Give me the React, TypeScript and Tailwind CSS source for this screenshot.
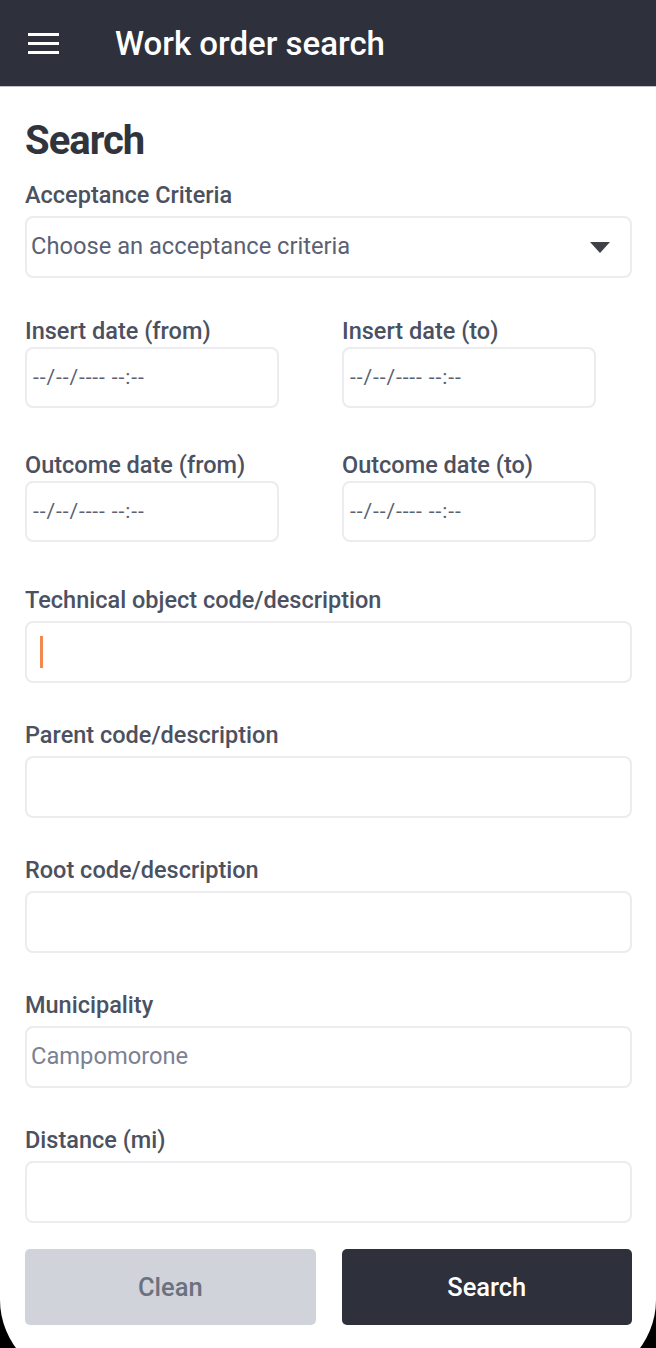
const dateFields = [
  ["Insert date (from)", "Insert date (to)"],
  ["Outcome date (from)", "Outcome date (to)"],
];

const textFields = [
  { label: "Technical object code/description", placeholder: "", caret: true },
  { label: "Parent code/description", placeholder: "" },
  { label: "Root code/description", placeholder: "" },
  { label: "Municipality", placeholder: "Campomorone" },
  { label: "Distance (mi)", placeholder: "" },
];

function Label({ children }: { children: React.ReactNode }) {
  return <div className="text-[23.5px] font-medium leading-[28px] text-[#4b5161]">{children}</div>;
}

function Box({ className = "", children }: { className?: string; children?: React.ReactNode }) {
  return (
    <div className={`flex items-center rounded-[8px] border-2 border-[#ececf0] bg-white ${className}`}>
      {children}
    </div>
  );
}

export default function App() {
  return (
    <div className="h-[1348px] overflow-hidden bg-black" style={{ fontFamily: "Roboto, 'Noto Sans', sans-serif" }}>
      <div className="h-[1380px] rounded-b-[80px] bg-white">
        {/* Header */}
        <header className="flex h-[87px] items-center border-b border-[#bfc0c8] bg-[#2e303c] pl-[28px]">
          <div className="flex w-[31px] flex-col gap-[6px] pt-[1px]">
            <span className="h-[3px] bg-white" />
            <span className="h-[3px] bg-white" />
            <span className="h-[3px] bg-white" />
          </div>
          <h1 className="ml-[56px] pt-[2px] text-[33px] font-medium text-white">Work order search</h1>
        </header>

        <main className="pl-[25px] pr-[24px] pt-[32px]">
          <h2 className="text-[40px] font-bold leading-[44px] tracking-[-1px] text-[#32343d]">Search</h2>

          {/* Acceptance criteria */}
          <div className="mt-[18px]">
            <Label>Acceptance Criteria</Label>
            <Box className="mt-[7px] h-[62px] justify-between pl-[4px] pr-[20px]">
              <span className="text-[23.7px] text-[#5a6173]">Choose an acceptance criteria</span>
              <svg width="20" height="11" viewBox="0 0 20 11">
                <path d="M0 0h20L10 11z" fill="#404049" />
              </svg>
            </Box>
          </div>

          {/* Date ranges */}
          {dateFields.map((row, i) => (
            <div key={i} className={`grid grid-cols-[254px_254px] gap-x-[63px] ${i === 0 ? "mt-[39px]" : "mt-[43px]"}`}>
              {row.map((label) => (
                <div key={label}>
                  <Label>{label}</Label>
                  <Box className="mt-[2px] h-[61px] pl-[6px]">
                    <span className="text-[21px] tracking-[0.9px] text-[#5a6173]">--/--/---- --:--</span>
                  </Box>
                </div>
              ))}
            </div>
          ))}

          {/* Text fields */}
          {textFields.map((f, i) => (
            <div key={f.label} className={i === 0 ? "mt-[44px]" : "mt-[38px]"}>
              <Label>{f.label}</Label>
              <Box className="mt-[7px] h-[62px] pl-[4px]">
                {f.caret && <span className="ml-[9px] h-[32px] w-[3px] bg-[#f3894e]" />}
                {f.placeholder && <span className="text-[23.7px] text-[#7a8194]">{f.placeholder}</span>}
              </Box>
            </div>
          ))}

          {/* Actions */}
          <div className="mt-[26px] grid grid-cols-2 gap-x-[26px]">
            <button className="h-[76px] rounded-[5px] bg-[#d0d3da] text-[25.5px] font-medium text-[#6c7180]">Clean</button>
            <button className="h-[76px] rounded-[5px] bg-[#2e303c] text-[25.5px] font-medium text-white">Search</button>
          </div>
        </main>
      </div>
    </div>
  );
}
